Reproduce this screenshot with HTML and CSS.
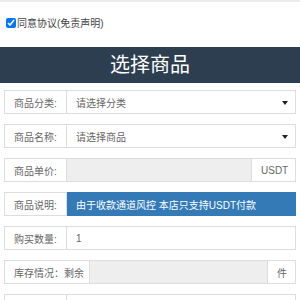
FILE: index.html
```html
<!DOCTYPE html>
<html>

<head>
    <title>选择商品</title>
    <link rel="stylesheet" href="styles.css">
</head>

<body>
    <div class="agree">
        <label><input type="checkbox" checked>同意协议(免责声明)</label>
    </div>
    <div class="title">选择商品</div>
    <div class="form">
        <div class="group">
            <span class="addon">商品分类:</span>
            <div class="field select">请选择分类<i class="caret"></i></div>
        </div>
        <div class="group">
            <span class="addon">商品名称:</span>
            <div class="field select">请选择商品<i class="caret"></i></div>
        </div>
        <div class="group">
            <span class="addon">商品单价:</span>
            <div class="field readonly"></div>
            <span class="addon unit">USDT</span>
        </div>
        <div class="group">
            <span class="addon">商品说明:</span>
            <div class="field notice">由于收款通道风控 本店只支持USDT付款</div>
        </div>
        <div class="group">
            <span class="addon">购买数量:</span>
            <div class="field">1</div>
        </div>
        <div class="group">
            <span class="addon wide">库存情况：剩余</span>
            <div class="field readonly"></div>
            <span class="addon unit small">件</span>
        </div>
        <div class="group">
            <span class="addon"></span>
            <div class="field"></div>
        </div>
    </div>
</body>

</html>
```
FILE: styles.css
```css
* {
    margin: 0;
    padding: 0;
    box-sizing: border-box;
}

body {
    font-family: "Liberation Sans", "Noto Sans CJK SC", sans-serif;
    font-size: 10px;
    color: #666;
    border-top: 2px solid #ececec;
    height: 300px;
    overflow: hidden;
}

.agree {
    height: 45px;
    padding: 13px 0 0 6px;
    color: #444;
}

.agree label {
    display: flex;
    align-items: center;
}

.agree input {
    width: 10px;
    height: 10px;
    margin: 0 1px 0 0;
}

.title {
    height: 36px;
    line-height: 36px;
    background-color: #2c3e50;
    color: #fff;
    font-size: 20px;
    text-align: center;
}

.form {
    padding: 7px 4px 0 4px;
}

.group {
    display: flex;
    height: 24px;
    margin-bottom: 10px;
}

.addon {
    width: 63px;
    flex-shrink: 0;
    display: flex;
    align-items: center;
    padding-left: 9px;
    white-space: nowrap;
    border: 1px solid #ddd;
    background-color: #fff;
}

.addon.wide {
    width: 86px;
}

.addon.unit {
    width: 44px;
    padding-left: 9px;
    border-left: none;
}

.addon.small {
    width: 28px;
}

.field {
    flex: 1;
    display: flex;
    align-items: center;
    padding-left: 9px;
    white-space: nowrap;
    border: 1px solid #ddd;
    border-left: none;
    background-color: #fff;
}

.field.readonly {
    background-color: #eee;
}

.field.notice {
    background-color: #337ab7;
    border-color: #337ab7;
    color: #fff;
}

.select {
    position: relative;
}

.caret {
    position: absolute;
    right: 7px;
    top: 10px;
    border-top: 4px solid #222;
    border-left: 3px solid transparent;
    border-right: 3px solid transparent;
}
```
